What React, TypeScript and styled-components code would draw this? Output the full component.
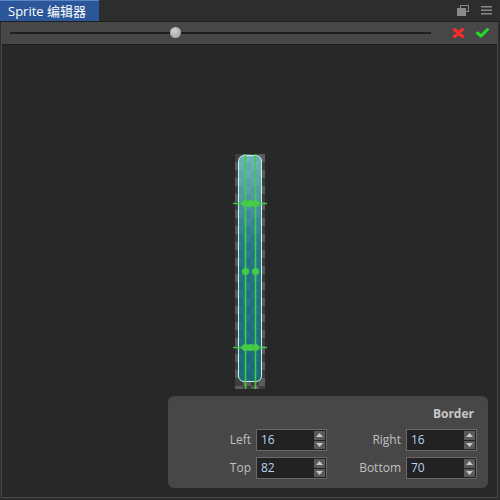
import React from "react";
import styled, { createGlobalStyle } from "styled-components";

const Global = createGlobalStyle`
  html, body { margin: 0; padding: 0; background: #2d2d2d; }
  body { font-family: "Segoe UI", "Open Sans", "Noto Sans", "Noto Sans CJK SC", sans-serif; }
`;

const Frame = styled.div`
  width: 500px;
  height: 500px;
  display: flex;
  flex-direction: column;
  background: #2d2d2d;
  box-sizing: border-box;
`;

const TabBar = styled.div`
  height: 21px;
  display: flex;
  align-items: stretch;
  background: #2d2d2d;
  border-bottom: 1px solid #1e1e1e;
`;

const Tab = styled.div`
  width: 99px;
  background: #2b579a;
  border-top: 1px solid #5b86c6;
  color: #ffffff;
  font-size: 13px;
  line-height: 20px;
  padding-left: 8px;
  box-sizing: border-box;
`;

const TabSpacer = styled.div`
  flex: 1;
`;

const TabIcons = styled.div`
  display: flex;
  align-items: center;
  gap: 12px;
  padding-right: 8px;
`;

const Body = styled.div`
  flex: 1;
  display: flex;
  flex-direction: column;
  border: 1px solid #4a4a4a;
  border-top: none;
  margin: 0 2px 2px 1px;
`;

const Toolbar = styled.div`
  height: 22px;
  background: #474747;
  display: flex;
  align-items: center;
  padding: 0 8px;
  gap: 12px;
  border-bottom: 1px solid #1e1e1e;
`;

const SliderTrack = styled.div`
  position: relative;
  flex: 1;
  height: 2px;
  background: #1f1f1f;
`;

const Thumb = styled.div`
  position: absolute;
  left: 160px;
  top: -5px;
  width: 11px;
  height: 11px;
  border-radius: 50%;
  background: radial-gradient(circle at 40% 35%, #d0d0d0, #9a9a9a);
`;

const ActionIcons = styled.div`
  display: flex;
  align-items: center;
  gap: 12px;
  margin-left: 10px;
`;

const Canvas = styled.div`
  flex: 1;
  background: #282828;
  position: relative;
  display: flex;
  flex-direction: column;
  align-items: flex-start;
`;

const SpriteBox = styled.div`
  position: relative;
  margin-top: 109px;
  margin-left: 233px;
  width: 30px;
  height: 235px;
  background-color: #4a4a4a;
  background-image: repeating-conic-gradient(#5c5c5c 0 25%, #3e3e3e 0 50%);
  background-size: 16px 16px;
  background-position: 0 0;
`;

const SpriteImage = styled.div`
  position: absolute;
  left: 3px;
  top: 1px;
  width: 24px;
  height: 227px;
  box-sizing: border-box;
  border-radius: 6px;
  border: 1.5px solid #c9f1f0;
  background: linear-gradient(to bottom, rgba(120, 205, 215, 0.8), rgba(30, 130, 150, 0.8) 40%, rgba(20, 110, 130, 0.85));
`;

const Overlay = styled.svg`
  position: absolute;
  left: -2px;
  top: 0;
  overflow: visible;
`;

const Panel = styled.div`
  position: absolute;
  left: 166px;
  top: 351px;
  width: 320px;
  height: 92px;
  background: #474747;
  border-radius: 6px;
  padding: 11px 11px 0 22px;
  box-sizing: border-box;
  display: flex;
  flex-direction: column;
`;

const PanelTitle = styled.div`
  align-self: flex-end;
  color: #c8c8c8;
  font-weight: bold;
  font-size: 12px;
  line-height: 14px;
  margin-right: 3px;
`;

const FieldGrid = styled.div`
  display: grid;
  grid-template-columns: 61px 71px 69px 71px;
  column-gap: 5px;
  row-gap: 6px;
  margin-top: 8px;
`;

const Label = styled.div`
  color: #c0c0c0;
  font-size: 12px;
  text-align: right;
  line-height: 22px;
`;

const Spin = styled.div`
  height: 22px;
  box-sizing: border-box;
  border: 1px solid #6a6a6a;
  background: #222222;
  display: flex;
  align-items: stretch;
`;

const SpinValue = styled.div`
  flex: 1;
  color: #b6d3f0;
  font-size: 12px;
  line-height: 20px;
  padding-left: 4px;
`;

const SpinButtons = styled.div`
  width: 11px;
  display: flex;
  flex-direction: column;
  gap: 1px;
  padding: 1px 1px 1px 0;
`;

const SpinButton = styled.div`
  flex: 1;
  background: #5a5a5a;
  display: flex;
  align-items: center;
  justify-content: center;
`;

const Arrow = ({ up }: { up: boolean }) => (
  <svg width="7" height="4" viewBox="0 0 7 4">
    <path d={up ? "M0 4 L3.5 0 L7 4 Z" : "M0 0 L3.5 4 L7 0 Z"} fill="#c8c8c8" />
  </svg>
);

const SpinBox = ({ value }: { value: string }) => (
  <Spin>
    <SpinValue>{value}</SpinValue>
    <SpinButtons>
      <SpinButton><Arrow up /></SpinButton>
      <SpinButton><Arrow up={false} /></SpinButton>
    </SpinButtons>
  </Spin>
);

const GREEN = "#44cc44";

const SliceGuides = () => (
  <Overlay width="34" height="235" viewBox="0 0 34 235">
    <line x1="12.5" y1="0" x2="12.5" y2="235" stroke={GREEN} strokeWidth="1.6" />
    <line x1="22.5" y1="0" x2="22.5" y2="235" stroke={GREEN} strokeWidth="1.6" />
    <line x1="0" y1="49.5" x2="34" y2="49.5" stroke={GREEN} strokeWidth="1.4" />
    <line x1="0" y1="193.5" x2="34" y2="193.5" stroke={GREEN} strokeWidth="1.4" />
    {[
      [12.5, 49.5], [17.5, 49.5], [22.5, 49.5],
      [12.5, 117.5], [22.5, 117.5],
      [12.5, 193.5], [17.5, 193.5], [22.5, 193.5],
    ].map(([x, y], i) => (
      <circle key={i} cx={x} cy={y} r="3.6" fill={GREEN} />
    ))}
  </Overlay>
);

export default function App() {
  return (
    <Frame>
      <Global />
      <TabBar>
        <Tab>Sprite 编辑器</Tab>
        <TabSpacer />
        <TabIcons>
          <svg width="12" height="11" viewBox="0 0 12 11">
            <rect x="3.5" y="0.5" width="8" height="6" fill="none" stroke="#8a8a8a" />
            <rect x="0.5" y="3.5" width="8" height="7" fill="#8a8a8a" stroke="#8a8a8a" />
          </svg>
          <svg width="11" height="9" viewBox="0 0 11 9">
            <rect x="0" y="0" width="11" height="1.5" fill="#8a8a8a" />
            <rect x="0" y="3.5" width="11" height="1.5" fill="#8a8a8a" />
            <rect x="0" y="7" width="11" height="1.5" fill="#8a8a8a" />
          </svg>
        </TabIcons>
      </TabBar>
      <Body>
        <Toolbar>
          <SliderTrack>
            <Thumb />
          </SliderTrack>
          <ActionIcons>
            <svg width="11" height="10" viewBox="0 0 11 10">
              <path d="M1.5 1.5 L9.5 8.5 M9.5 1.5 L1.5 8.5" stroke="#ff2a2a" strokeWidth="3" strokeLinecap="round" />
            </svg>
            <svg width="13" height="10" viewBox="0 0 13 10">
              <path d="M1.5 5 L5 8 L11.5 1.5" stroke="#22dd22" strokeWidth="3" fill="none" strokeLinecap="round" strokeLinejoin="round" />
            </svg>
          </ActionIcons>
        </Toolbar>
        <Canvas>
          <SpriteBox>
            <SpriteImage />
            <SliceGuides />
          </SpriteBox>
          <Panel>
            <PanelTitle>Border</PanelTitle>
            <FieldGrid>
              <Label>Left</Label>
              <SpinBox value="16" />
              <Label>Right</Label>
              <SpinBox value="16" />
              <Label>Top</Label>
              <SpinBox value="82" />
              <Label>Bottom</Label>
              <SpinBox value="70" />
            </FieldGrid>
          </Panel>
        </Canvas>
      </Body>
    </Frame>
  );
}
